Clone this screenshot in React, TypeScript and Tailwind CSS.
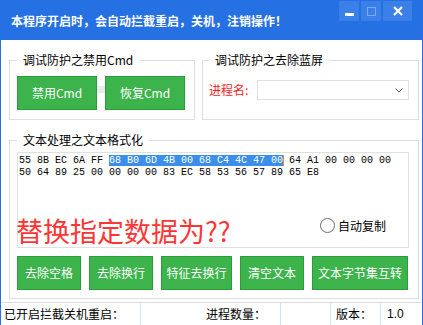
import React from "react";

function Group({
  title,
  className,
  titleLeft,
  children,
}: {
  title: string;
  className: string;
  titleLeft: string;
  children: React.ReactNode;
}) {
  return (
    <div className={"relative border border-[#dedede] " + className}>
      <span className={"absolute -top-[8px] bg-white px-[6px] leading-[14px] text-[12px] text-black " + titleLeft}>
        {title}
      </span>
      {children}
    </div>
  );
}

function GreenButton({ label, w }: { label: string; w: string }) {
  return (
    <div
      className={
        "h-[34px] flex items-center justify-center bg-[#3cb44b] border border-[#2a9c38] text-white text-[12px] leading-[14px] " +
        w
      }
    >
      {label}
    </div>
  );
}

export default function App() {
  return (
    <div className="w-[423px] h-[325px] bg-white flex flex-col border-x border-[#2570e2] overflow-hidden font-['Noto_Sans_CJK_SC',sans-serif] text-[12px] text-black">
      {/* title bar */}
      <div className="h-[40px] shrink-0 bg-[#2570e2] flex justify-between">
        <div className="pl-[10px] pt-[14px] leading-[14px] text-[12px] font-bold text-white">
          本程序开启时，会自动拦截重启，关机，注销操作！
        </div>
        <div className="flex gap-[2px] mr-[10px] mt-[1px] self-start">
          <div className="w-[20px] h-[20px] bg-[#3a80e8] flex justify-center">
            <div className="w-[9px] h-[3px] bg-white mt-[12px]" />
          </div>
          <div className="w-[20px] h-[20px] bg-[#3a80e8] flex items-center justify-center">
            <div className="w-[9px] h-[9px] border border-[#7aaaf0]" />
          </div>
          <div className="w-[29px] h-[20px] bg-[#3a80e8] flex items-center justify-center">
            <svg width="10" height="10" viewBox="0 0 10 10">
              <path d="M1 1 L9 9 M9 1 L1 9" stroke="white" strokeWidth="2.2" />
            </svg>
          </div>
        </div>
      </div>

      {/* top groups */}
      <div className="flex mt-[20px] ml-[8px] gap-[7px]">
        <Group title="调试防护之禁用Cmd" className="w-[186px] h-[60px]" titleLeft="left-[7px]">
          <div className="flex pt-[15px] pl-[7px]">
            <GreenButton label="禁用Cmd" w="w-[80px]" />
            <div className="w-[8px] h-[7px] bg-[#ebebeb] mt-[10px]" />
            <GreenButton label="恢复Cmd" w="w-[80px]" />
          </div>
        </Group>
        <Group title="调试防护之去除蓝屏" className="w-[217px] h-[60px]" titleLeft="left-[6px]">
          <div className="flex items-center pt-[19px] pl-[6px]">
            <div className="w-[48px] text-[#ff1a1a] text-[12px] leading-[14px]">进程名:</div>
            <div className="w-[152px] h-[20px] border border-[#e0e0e0] flex items-center justify-end pr-[5px]">
              <svg width="8" height="5" viewBox="0 0 8 5">
                <path d="M0.5 0.5 L4 4 L7.5 0.5" stroke="#555" strokeWidth="1" fill="none" />
              </svg>
            </div>
          </div>
        </Group>
      </div>

      {/* text group */}
      <Group title="文本处理之文本格式化" className="mt-[20px] ml-[8px] w-[410px] h-[159px]" titleLeft="left-[7px]">
        <div className="pt-[11px] pl-[7px] flex flex-col">
          <div className="w-[392px] h-[96px] border border-[#e0e0e0] flex flex-col justify-between">
            <div className="pt-[2px] pl-[1px] font-['Liberation_Mono',monospace] text-[10px] leading-[12px] whitespace-pre text-black">
              <div>
                {"55 8B EC 6A FF "}
                <span className="bg-[#3b8eea] text-white shadow-[1px_0_0_#e08a2c]">
                  {"68 B0 6D 4B 00 68 C4 4C 47 00"}
                </span>
                {" 64 A1 00 00 00 00"}
              </div>
              <div>{"50 64 89 25 00 00 00 00 83 EC 58 53 56 57 89 65 E8"}</div>
            </div>
            <div className="flex justify-between items-start pb-[3px]">
              <div className="-ml-[2px] text-[27px] leading-[27px] text-[#ff3535]">替换指定数据为??</div>
              <div className="flex items-center gap-[3px] mr-[22px] mt-[1px]">
                <div className="w-[15px] h-[15px] rounded-full border-[1.5px] border-[#6b6b6b] bg-white" />
                <span className="text-[12px] leading-[14px]">自动复制</span>
              </div>
            </div>
          </div>
          <div className="flex gap-[8px] mt-[8px]">
            <GreenButton label="去除空格" w="w-[64px]" />
            <GreenButton label="去除换行" w="w-[64px]" />
            <GreenButton label="特征去换行" w="w-[71px]" />
            <GreenButton label="清空文本" w="w-[64px]" />
            <GreenButton label="文本字节集互转" w="w-[96px]" />
          </div>
        </div>
      </Group>

      {/* status bar */}
      <div className="mt-[3px] h-[23px] border-t border-[#dcdcdc] flex text-[12px] leading-[14px]">
        <div className="w-[139px] pl-[3px] flex items-center">已开启拦截关机重启：</div>
        <div className="w-[140px] border-l border-[#d3e5f7] pl-[65px] flex items-center">进程数量：</div>
        <div className="w-[50px] border-l border-[#d3e5f7]" />
        <div className="w-[50px] border-l border-[#d3e5f7] pl-[5px] flex items-center">版本：</div>
        <div className="flex-1 border-l border-[#d3e5f7] pl-[6px] flex items-center font-['Liberation_Sans',sans-serif]">
          1.0
        </div>
      </div>
    </div>
  );
}
